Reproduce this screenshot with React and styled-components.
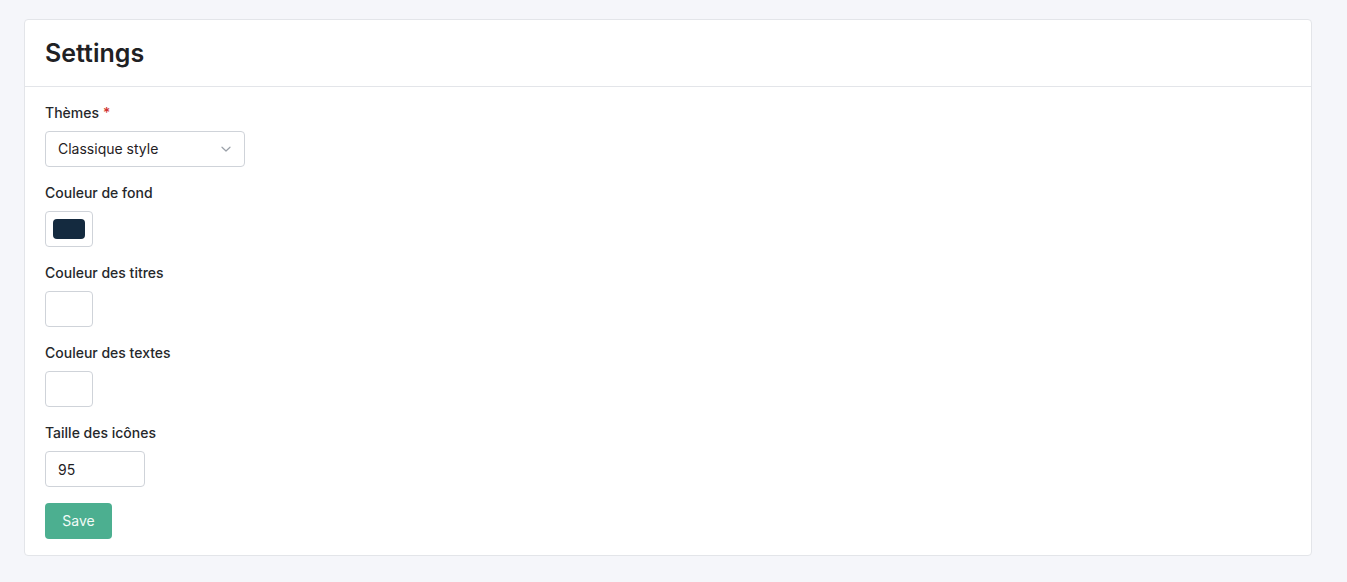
import React from "react";
import styled, { createGlobalStyle } from "styled-components";

const Global = createGlobalStyle`
  html, body { margin: 0; padding: 0; background: #f5f6fa; }
  body { font-family: Inter, "Noto Sans", sans-serif; color: #1f2124; }
  * { box-sizing: border-box; }
`;

const Page = styled.div`
  padding: 19px 35px 27px 24px;
  min-height: 582px;
`;

const Card = styled.section`
  background: #fff;
  border: 1px solid #e3e5e9;
  border-radius: 4px;
`;

const Header = styled.header`
  height: 67px;
  padding: 0 20px;
  display: flex;
  align-items: center;
  border-bottom: 1px solid #e3e5e9;
`;

const Title = styled.h1`
  margin: 0;
  font-size: 25px;
  font-weight: 600;
  color: #1f2124;
`;

const Body = styled.form`
  padding: 16px 20px 16px;
  display: flex;
  flex-direction: column;
`;

const Field = styled.div`
  display: flex;
  flex-direction: column;
  align-items: flex-start;
  margin-bottom: 16px;
`;

const Label = styled.label`
  font-size: 14px;
  line-height: 20px;
  font-weight: 500;
  margin-bottom: 8px;
  color: #26282b;
  -webkit-font-smoothing: antialiased;
`;

const Required = styled.span`
  color: #d0312d;
  margin-left: 4px;
`;

const SelectBox = styled.div`
  width: 200px;
  height: 36px;
  border: 1px solid #cfd3d9;
  border-radius: 4px;
  display: flex;
  align-items: center;
  justify-content: space-between;
  padding: 0 12px 1px 12px;
  font-size: 14px;
  color: #1f2124;
`;

const Swatch = styled.div`
  width: 48px;
  height: 36px;
  border: 1px solid #cfd3d9;
  border-radius: 4px;
  padding: 7px 7px;
  display: flex;
`;

const SwatchFill = styled.div`
  flex: 1;
  border-radius: 4px;
  background: ${(p) => p.$color};
`;

const NumberInput = styled.div`
  width: 100px;
  height: 36px;
  border: 1px solid #cfd3d9;
  border-radius: 4px;
  display: flex;
  align-items: center;
  padding: 0 12px;
  font-size: 14px;
`;

const Button = styled.button`
  align-self: flex-start;
  width: 67px;
  height: 36px;
  padding: 0 0 1px;
  border: none;
  border-radius: 4px;
  background: #4caf90;
  color: #f2fbf7;
  font-family: Inter, "Noto Sans", sans-serif;
  font-size: 14px;
  font-weight: 400;
  cursor: pointer;
`;

const Chevron = () => (
  <svg width="12" height="12" viewBox="0 0 12 12" fill="none">
    <path d="M2 4.2 L6 8 L10 4.2" stroke="#9aa0a8" strokeWidth="1.2" strokeLinecap="round" strokeLinejoin="round" />
  </svg>
);

export default function App() {
  return (
    <>
      <Global />
      <Page>
        <Card>
          <Header>
            <Title>Settings</Title>
          </Header>
          <Body onSubmit={(e) => e.preventDefault()}>
            <Field>
              <Label>
                Thèmes<Required>*</Required>
              </Label>
              <SelectBox>
                <span>Classique style</span>
                <Chevron />
              </SelectBox>
            </Field>
            <Field>
              <Label>Couleur de fond</Label>
              <Swatch>
                <SwatchFill $color="#142a3f" />
              </Swatch>
            </Field>
            <Field>
              <Label>Couleur des titres</Label>
              <Swatch>
                <SwatchFill $color="#ffffff" />
              </Swatch>
            </Field>
            <Field>
              <Label>Couleur des textes</Label>
              <Swatch>
                <SwatchFill $color="#ffffff" />
              </Swatch>
            </Field>
            <Field>
              <Label>Taille des icônes</Label>
              <NumberInput>95</NumberInput>
            </Field>
            <Button type="submit">Save</Button>
          </Body>
        </Card>
      </Page>
    </>
  );
}
